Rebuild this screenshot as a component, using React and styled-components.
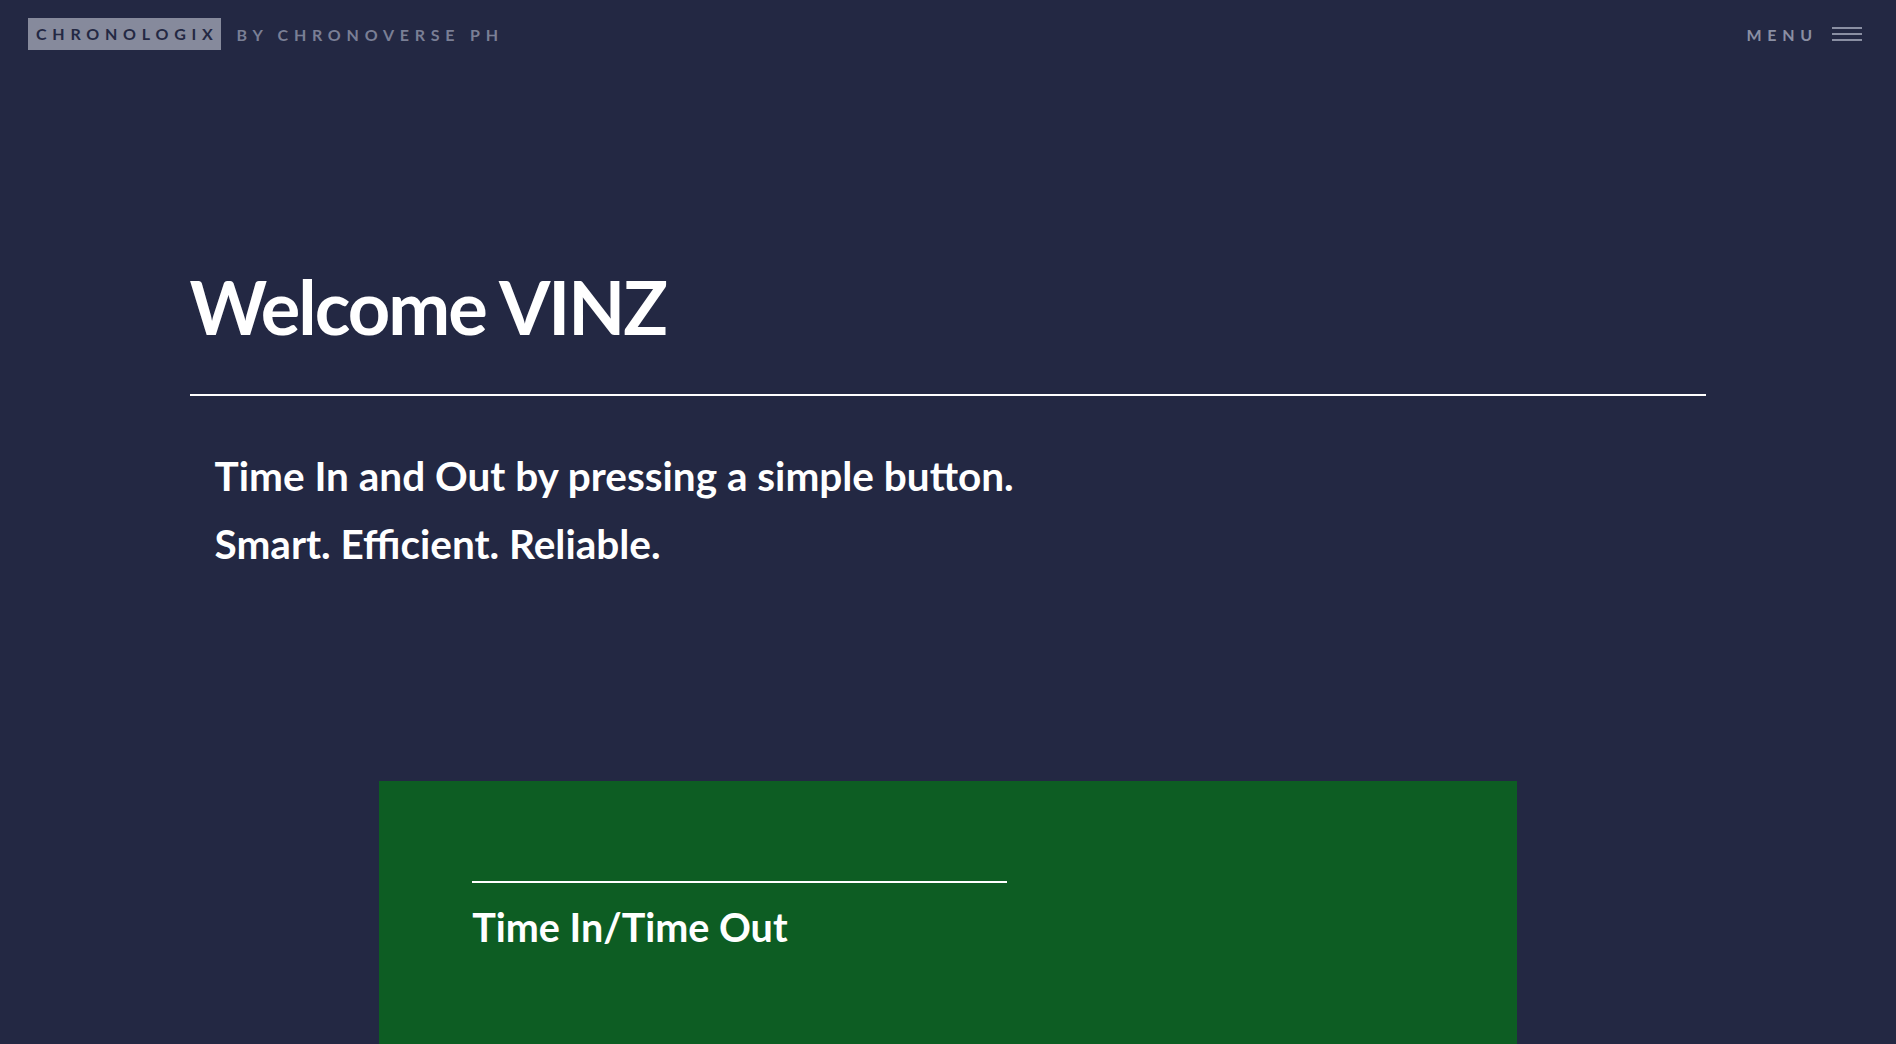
import React from "react";
import styled, { createGlobalStyle } from "styled-components";

const GlobalStyle = createGlobalStyle`
  html, body {
    margin: 0;
    padding: 0;
    background: #232843;
  }
  body {
    font-family: "Lato", "Noto Sans", sans-serif;
    color: #ffffff;
    min-height: 100vh;
  }
`;

const Page = styled.div`
  min-height: 100vh;
  background: #232843;
  overflow: hidden;
`;

const Header = styled.header`
  display: flex;
  justify-content: space-between;
  align-items: center;
  height: 68px;
  padding: 0 34px 0 28px;
`;

const Brand = styled.div`
  display: flex;
  align-items: center;
  gap: 16px;
`;

const Logo = styled.span`
  display: inline-block;
  background: #868a9c;
  color: #232843;
  font-size: 16px;
  font-weight: 700;
  letter-spacing: 0.36em;
  padding: 5px 2px 6px 8px;
  line-height: 21px;
`;

const Tagline = styled.span`
  color: #7a7f95;
  font-size: 16px;
  font-weight: 700;
  letter-spacing: 0.36em;
`;

const MenuButton = styled.button`
  display: flex;
  align-items: center;
  gap: 14px;
  background: none;
  border: 0;
  padding: 0;
  color: #8a8fa3;
  font-family: inherit;
  font-size: 16px;
  font-weight: 700;
  letter-spacing: 0.36em;
  cursor: pointer;
`;

const Burger = styled.span`
  display: flex;
  flex-direction: column;
  gap: 4px;
  width: 30px;

  span {
    display: block;
    height: 2px;
    background: #8a8fa3;
  }
`;

const Hero = styled.section`
  margin: 0 10%;
  padding-top: 202px;
`;

const Title = styled.h1`
  margin: 0;
  font-size: 74px;
  font-weight: 700;
  letter-spacing: -2px;
  line-height: 1;
  padding-bottom: 50px;
  border-bottom: 2px solid #ffffff;
`;

const Lead = styled.p`
  margin: 0;
  padding-left: 25px;
  font-size: 40.5px;
  font-weight: 700;
  line-height: 68px;

  &:first-of-type {
    margin-top: 46px;
  }
`;

const Card = styled.section`
  width: 60%;
  margin: 203px auto 0;
  background: #0d5d23;
  padding: 100px 93px 100px;
  box-sizing: border-box;
`;

const CardRule = styled.hr`
  width: 535px;
  margin: 0;
  border: 0;
  border-top: 2px solid #ffffff;
`;

const CardTitle = styled.h2`
  margin: 20px 0 0;
  font-size: 39.5px;
  font-weight: 700;
  line-height: 1.2;
`;

export default function App() {
  return (
    <Page>
      <GlobalStyle />
      <Header>
        <Brand>
          <Logo>CHRONOLOGIX</Logo>
          <Tagline>BY CHRONOVERSE PH</Tagline>
        </Brand>
        <MenuButton>
          MENU
          <Burger>
            <span />
            <span />
            <span />
          </Burger>
        </MenuButton>
      </Header>

      <Hero>
        <Title>Welcome VINZ</Title>
        <Lead>Time In and Out by pressing a simple button.</Lead>
        <Lead>Smart. Efficient. Reliable.</Lead>
      </Hero>

      <Card>
        <CardRule />
        <CardTitle>Time In/Time Out</CardTitle>
      </Card>
    </Page>
  );
}
